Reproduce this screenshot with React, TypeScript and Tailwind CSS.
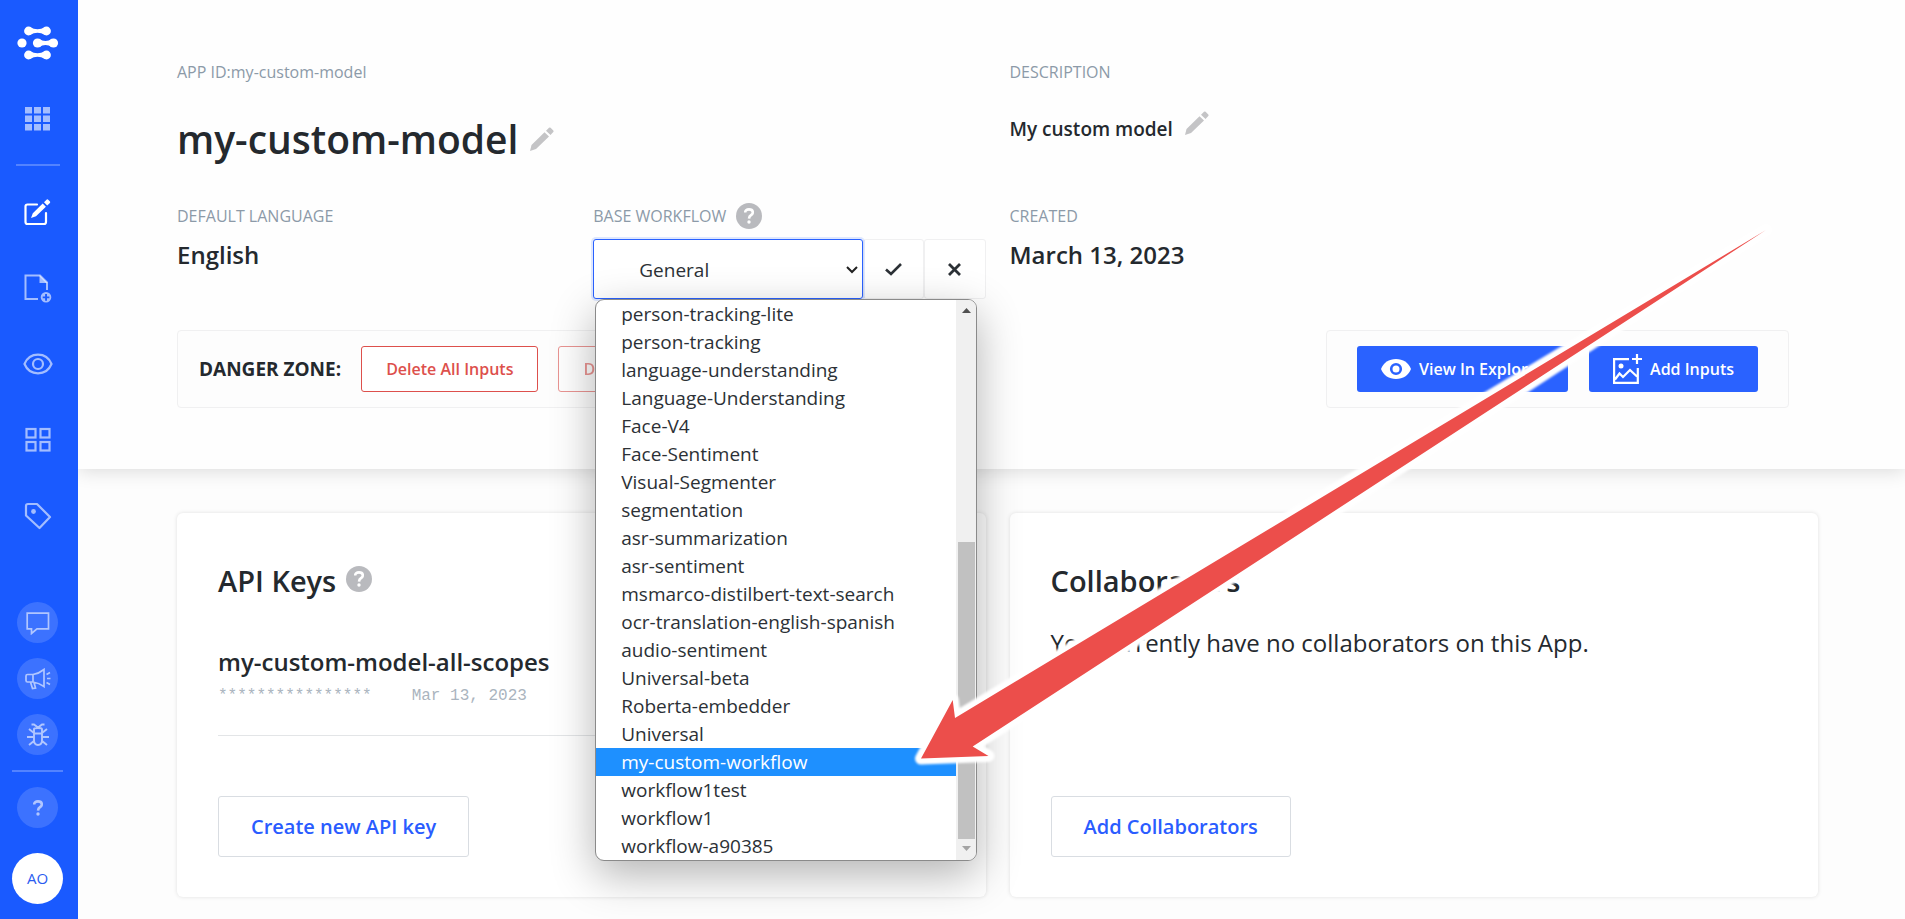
import React from "react";

const workflows = [
  "person-tracking-lite",
  "person-tracking",
  "language-understanding",
  "Language-Understanding",
  "Face-V4",
  "Face-Sentiment",
  "Visual-Segmenter",
  "segmentation",
  "asr-summarization",
  "asr-sentiment",
  "msmarco-distilbert-text-search",
  "ocr-translation-english-spanish",
  "audio-sentiment",
  "Universal-beta",
  "Roberta-embedder",
  "Universal",
  "my-custom-workflow",
  "workflow1test",
  "workflow1",
  "workflow-a90385",
];

const highlighted = "my-custom-workflow";

function Logo() {
  return (
    <svg width="42" height="34" viewBox="0 0 42 34" fill="white" aria-hidden="true">
      <circle cx="11.5" cy="5" r="4.4" />
      <circle cx="29.5" cy="5" r="4.4" />
      <path d="M13 .9Q20.500 5.400 28 .9V9.100Q20.500 4.600 13 9.100Z" />
      <circle cx="5" cy="17" r="4.600" />
      <circle cx="20.500" cy="17" r="4.600" />
      <circle cx="36.500" cy="17" r="4.600" />
      <path d="M22 12.700Q28.500 17.500 35 12.700V21.300Q28.500 16.500 22 21.300Z" />
      <circle cx="11.500" cy="29" r="4.400" />
      <circle cx="29.500" cy="29" r="4.400" />
      <path d="M13 24.900Q20.500 29.400 28 24.900V33.100Q20.500 28.600 13 33.100Z" />
    </svg>
  );
}

function AppsIcon() {
  return (
    <svg width="25" height="24" viewBox="0 0 25 24" fill="currentColor" aria-hidden="true">
      {[0, 8.5, 17].map((y) =>
        [0, 9, 18].map((x) => <rect key={`${x}-${y}`} x={x} y={y} width="7" height="6.5" />)
      )}
    </svg>
  );
}

function EditIcon() {
  return (
    <svg width="27" height="27" viewBox="0 0 27 27" aria-hidden="true">
      <path d="M13 5.500H3.500Q1.500 5.500 1.500 7.500V23Q1.500 25 3.500 25H20Q22 25 22 23V14" fill="none" stroke="currentColor" strokeWidth="2.200" strokeLinecap="round" />
      <path d="M7 19L8.800 14.200L18.700 4.600L21.900 7.800L12 17.200ZM20 3.300L22.800.600Q23.500 0 24.200.700L26 2.500Q26.500 3.200 25.900 3.900L23.200 6.500Z" fill="currentColor" />
    </svg>
  );
}

function FileAddIcon() {
  return (
    <svg width="28" height="29" viewBox="0 0 28 29" aria-hidden="true">
      <path d="M14 25H1.500V1.500H16L23 8.500V16" fill="none" stroke="currentColor" strokeWidth="2" />
      <path d="M15.500 1V9H23.500Z" fill="currentColor" />
      <path fillRule="evenodd" d="M22 18a5.300 5.300 0 1 0 0 10.600a5.300 5.300 0 1 0 0-10.600ZM21.100 20h1.900v2.400h2.400v1.900h-2.400v2.400h-1.900v-2.400h-2.400v-1.900h2.400Z" fill="currentColor" />
    </svg>
  );
}

function EyeIcon() {
  return (
    <svg width="30" height="22" viewBox="0 0 30 22" fill="none" stroke="currentColor" strokeWidth="2.200" aria-hidden="true">
      <path d="M1.500 11C4 5 9 1.700 15 1.700S26 5 28.500 11C26 17 21 20.300 15 20.300S4 17 1.500 11Z" />
      <circle cx="15" cy="11" r="5" />
    </svg>
  );
}

function SquaresIcon() {
  return (
    <svg width="26" height="26" viewBox="0 0 26 26" fill="none" stroke="currentColor" strokeWidth="2.200" aria-hidden="true">
      <rect x="1.500" y="2" width="9" height="8.500" />
      <rect x="15.500" y="2" width="9" height="8.500" />
      <rect x="1.500" y="15" width="9" height="8.500" />
      <rect x="15.500" y="15" width="9" height="8.500" />
    </svg>
  );
}

function TagIcon() {
  return (
    <svg width="28" height="28" viewBox="0 0 28 28" aria-hidden="true">
      <path d="M2 4Q2 2 4 2H13L26 15L15.500 26L2 13.500Z" fill="none" stroke="currentColor" strokeWidth="2.200" strokeLinejoin="round" />
      <circle cx="9.500" cy="9.500" r="2.400" fill="currentColor" />
    </svg>
  );
}

function ChatIcon() {
  return (
    <svg width="24" height="24" viewBox="0 0 24 24" fill="none" stroke="currentColor" strokeWidth="1.700" aria-hidden="true">
      <path d="M1.200 2.200H22.500V17.800H11L5.500 22.500V17.800H1.200Z" />
    </svg>
  );
}

function MegaphoneIcon() {
  return (
    <svg width="26" height="22" viewBox="0 0 26 22" fill="none" stroke="currentColor" strokeWidth="1.700" aria-hidden="true">
      <path d="M8 6.500H2.500Q1 6.500 1 8V12.500Q1 14 2.500 14H8ZM8 6.500Q14 5.500 19 1.500V18.500Q14 15 8 14M5.500 14L7.500 20.500L10.500 20L9 14.500M21.500 6.500L25 4.500M22 10.500H25.500M21.500 14.500L25 16.500" />
    </svg>
  );
}

function BugIcon() {
  return (
    <svg width="22" height="24" viewBox="0 0 22 24" fill="none" stroke="currentColor" strokeWidth="1.900" aria-hidden="true">
      <path d="M7 6Q7 5 11 5T15 6V17Q15 22 11 22T7 17ZM7 10.500H15M4.500 1.500H7L11 4.500L15 1.500H17.500M7 10L2 6M15 10L20 6M7 14H0M15 14H22M7.500 17.500L2 22M14.500 17.500L20 22" />
    </svg>
  );
}

function PencilIcon() {
  return (
    <svg width="24" height="24" viewBox="0 0 24 24" fill="currentColor" aria-hidden="true">
      <path d="M0 24L1.500 18L14.500 5.200L19 9.500L6 22ZM16 3.800L19 .800Q19.800 0 20.600.800L23.300 3.400Q24 4.200 23.300 5L20.500 8Z" />
    </svg>
  );
}

function ViewIcon() {
  return (
    <svg width="30" height="20" viewBox="0 0 30 20" aria-hidden="true">
      <path d="M0 10C2.500 3.500 8 0 15 0S27.500 3.500 30 10C27.500 16.500 22 20 15 20S2.500 16.500 0 10Z" fill="white" />
      <circle cx="15" cy="10" r="4.800" fill="white" stroke="#2a62ff" strokeWidth="2.600" />
    </svg>
  );
}

function AddImageIcon() {
  return (
    <svg width="29" height="30" viewBox="0 0 29 30" fill="none" stroke="white" strokeWidth="2.200" aria-hidden="true">
      <path d="M16 5.200H1.100V28.800H24.800V14M24 0V10M19 5H29M2 25.500L6.500 19.500L10 23L17 16L24 22.500" />
      <circle cx="8" cy="12" r="2.500" fill="white" stroke="none" />
    </svg>
  );
}

function QuestionMark() {
  return (
    <svg width="10" height="16" viewBox="0 0 10 16" fill="none" stroke="currentColor" strokeWidth="2.600" aria-hidden="true">
      <path d="M1.200 4.600Q1.200 1.400 5 1.400T8.800 4.300Q8.800 6 7 7.200T5 10.600" />
      <circle cx="5" cy="14" r="1.700" fill="currentColor" stroke="none" />
    </svg>
  );
}

function Help({ label }: { label: string }) {
  return (
    <button type="button" aria-label={label} className="flex size-[26px] shrink-0 items-center justify-center rounded-full bg-[#b9babe] text-white">
      <QuestionMark />
    </button>
  );
}

const navItems = [
  { label: "Edit app", icon: <EditIcon />, active: true },
  { label: "Add inputs", icon: <FileAddIcon />, active: false },
  { label: "Explorer", icon: <EyeIcon />, active: false },
  { label: "Models", icon: <SquaresIcon />, active: false },
  { label: "Concepts", icon: <TagIcon />, active: false },
];

const helpItems = [
  { label: "Chat", icon: <ChatIcon /> },
  { label: "Announcements", icon: <MegaphoneIcon /> },
  { label: "Report a bug", icon: <BugIcon /> },
];

function Sidebar() {
  return (
    <aside className="sticky top-0 flex h-screen w-[78px] shrink-0 flex-col items-center bg-[#1a5aff] pt-2.5 pr-[3px] pb-[15px] text-white/60">
      <a href="#home" aria-label="Home" className="flex h-[66px] shrink-0 items-center">
        <Logo />
      </a>
      <a href="#apps" aria-label="Apps" className="flex h-[88px] shrink-0 items-start pt-[31px]">
        <AppsIcon />
      </a>
      <div className="h-0.5 w-11 shrink-0 bg-white/25" />
      <nav className="mt-2 flex shrink-0 flex-col">
        {navItems.map((item) => (
          <a
            key={item.label}
            href="#section"
            aria-label={item.label}
            className={item.active ? "flex h-[76px] items-center justify-center text-white" : "flex h-[76px] items-center justify-center"}
          >
            {item.icon}
          </a>
        ))}
      </nav>
      <div className="mt-auto flex shrink-0 flex-col items-center gap-[15px]">
        {helpItems.map((item) => (
          <button key={item.label} type="button" aria-label={item.label} className="flex size-[41px] items-center justify-center rounded-full bg-white/15">
            {item.icon}
          </button>
        ))}
        <div className="h-0.5 w-[51px] bg-white/25" />
        <button type="button" aria-label="Help" className="flex size-[41px] items-center justify-center rounded-full bg-white/15">
          <QuestionMark />
        </button>
      </div>
      <button type="button" className="mt-[25px] size-[51px] shrink-0 rounded-full bg-white text-[15px] text-[#2a5cf0]">
        AO
      </button>
    </aside>
  );
}

function Label({ children }: { children: React.ReactNode }) {
  return <div className="flex h-6 items-center pt-0.5 text-base text-[#8c9aa8]">{children}</div>;
}

function WorkflowMenu() {
  return (
    <div className="absolute top-[60px] left-0.5 z-10 flex w-[382px] overflow-hidden rounded-[9px] border border-[#8a8a8a] bg-white shadow-[0_14px_44px_rgba(0,0,0,0.3)]">
      <ul role="listbox" aria-label="Base workflow" className="flex-1">
        {workflows.map((name) => (
          <li
            key={name}
            role="option"
            aria-selected={name === highlighted}
            className={
              name === highlighted
                ? "h-7 bg-[#1e90ff] pl-[25px] text-[19px] leading-7 text-white"
                : "h-7 pl-[25px] text-[19px] leading-7 text-[#2c3136]"
            }
          >
            {name}
          </li>
        ))}
      </ul>
      <div className="flex w-5 flex-col items-center bg-[#f0f0f0]" aria-hidden="true">
        <svg width="9" height="22" viewBox="0 0 9 22" fill="#505050">
          <path d="M0 13L4.500 8L9 13Z" />
        </svg>
        <div className="mt-auto h-[297px] w-[17px] bg-[#c1c1c1]" />
        <svg width="9" height="21" viewBox="0 0 9 21" fill="#a3a3a3">
          <path d="M0 7L4.500 12L9 7Z" />
        </svg>
      </div>
    </div>
  );
}

function WorkflowPicker() {
  return (
    <div className="relative flex h-[60px]">
      <div className="relative flex w-[270px]">
        <select
          id="base-workflow"
          defaultValue="General"
          className="w-full appearance-none rounded-[3px] border border-[#2a62ff] bg-white pt-0.5 pl-[45px] text-[19px] text-[#2c3136] shadow-[0_0_0_2px_rgba(42,98,255,0.15)] outline-none"
        >
          <option>General</option>
          {workflows.map((name) => (
            <option key={name}>{name}</option>
          ))}
        </select>
        <svg width="12" height="8" viewBox="0 0 12 8" fill="none" stroke="#222" strokeWidth="2" className="pointer-events-none absolute top-[27px] right-[5px]" aria-hidden="true">
          <path d="M1 1L6 6L11 1" />
        </svg>
      </div>
      <button type="button" aria-label="Save" className="flex flex-1 items-center justify-center rounded-[3px] border border-[#f0f0f1] bg-white text-[#2c3136]">
        <svg width="17" height="13" viewBox="0 0 17 13" fill="none" stroke="currentColor" strokeWidth="2.600" aria-hidden="true">
          <path d="M1 6.500L6 11L16 1" />
        </svg>
      </button>
      <button type="button" aria-label="Cancel" className="flex flex-1 items-center justify-center rounded-[3px] border border-[#f0f0f1] bg-white text-[#2c3136]">
        <svg width="13" height="13" viewBox="0 0 13 13" fill="none" stroke="currentColor" strokeWidth="2.800" aria-hidden="true">
          <path d="M1 1L12 12M12 1L1 12" />
        </svg>
      </button>
      <WorkflowMenu />
    </div>
  );
}

function Arrow() {
  return (
    <svg width="865" height="550" viewBox="0 0 865 550" className="pointer-events-none absolute top-[220px] left-[911px] z-20" aria-hidden="true">
      <defs>
        <filter id="soft" x="-5%" y="-5%" width="110%" height="110%">
          <feGaussianBlur stdDeviation="0.8" />
        </filter>
      </defs>
      <path d="M10 538.500L41.700 480L44 498L855 10L61.700 526.500L77.500 536Z" fill="white" stroke="white" strokeWidth="12" strokeLinejoin="round" filter="url(#soft)" />
      <path d="M10 538.500L41.700 480L44 498L855 10L61.700 526.500L77.500 536Z" fill="#ec4e4b" />
    </svg>
  );
}

function Card({ title, help, action, children }: { title: string; help?: boolean; action: string; children: React.ReactNode }) {
  return (
    <section className="flex h-[384px] flex-col rounded-md bg-white px-[41px] pt-12 pb-10 shadow-[0_0_4px_rgba(0,0,0,0.12)]">
      <div className="flex h-10 items-center gap-2.5">
        <h2 className="text-[29px] font-semibold text-[#24292e]">{title}</h2>
        {help && (
          <div className="mb-1">
            <Help label={`About ${title}`} />
          </div>
        )}
      </div>
      {children}
      <button type="button" className="mt-auto h-[61px] self-start rounded-[3px] border border-[#d9dde2] bg-white px-8 text-xl font-semibold text-[#2a5cff]">
        {action}
      </button>
    </section>
  );
}

export default function App() {
  return (
    <div className="relative flex min-h-screen bg-[#fdfdfd] font-['Open_Sans','Noto_Sans',sans-serif] text-[#24292e]">
      <Sidebar />
      <main className="min-w-0 flex-1">
        <header className="bg-[#fefefe] pt-[59px] pr-[87px] pb-[61px] pl-[99px] shadow-[0_2px_18px_rgba(0,0,0,0.14)]">
          <div className="grid grid-cols-2 gap-x-6">
            <div>
              <Label>APP ID:my-custom-model</Label>
              <div className="mt-7 flex h-14 items-center gap-3">
                <h1 className="text-[39px] font-semibold">my-custom-model</h1>
                <button type="button" aria-label="Edit app ID" className="text-[#c4c4c6]"><PencilIcon /></button>
              </div>
            </div>
            <div>
              <Label>DESCRIPTION</Label>
              <div className="mt-7 flex h-9 items-center gap-3">
                <p className="text-[19px] font-semibold">My custom model</p>
                <button type="button" aria-label="Edit description" className="mb-3 text-[#c4c4c6]"><PencilIcon /></button>
              </div>
            </div>
          </div>
          <div className="mt-9 grid grid-cols-4 gap-x-6">
            <div>
              <Label>DEFAULT LANGUAGE</Label>
              <p className="mt-3 text-2xl font-semibold">English</p>
            </div>
            <div>
              <Label>
                <label htmlFor="base-workflow" className="mr-2.5">BASE WORKFLOW</label>
                <Help label="About base workflow" />
              </Label>
              <div className="mt-3">
                <WorkflowPicker />
              </div>
            </div>
            <div>
              <Label>CREATED</Label>
              <p className="mt-3 text-2xl font-semibold">March 13, 2023</p>
            </div>
          </div>
          <div className="mt-[31px] flex justify-between pr-[29px]">
            <div className="flex h-[78px] items-center gap-5 rounded border border-[#f0f0f1] bg-[#fdfdfd] px-[21px]">
              <span className="text-[19px] font-bold">DANGER ZONE:</span>
              <button type="button" className="h-[46px] rounded-[3px] border border-[#dd504c] bg-white px-6 text-base font-semibold text-[#dd504c]">
                Delete All Inputs
              </button>
              <button type="button" disabled className="h-[46px] rounded-[3px] border border-[#dd504c] bg-white px-6 text-base font-semibold text-[#dd504c] opacity-60">
                Delete App
              </button>
            </div>
            <div className="flex h-[78px] items-center gap-[21px] rounded border border-[#f0f0f1] bg-[#fdfdfd] px-[30px]">
              <button type="button" className="flex h-[46px] items-center gap-2 rounded-[3px] bg-[#2a62ff] px-6 text-base font-semibold text-white">
                <ViewIcon />
                View In Explorer
              </button>
              <button type="button" className="flex h-[46px] items-center gap-2 rounded-[3px] bg-[#2a62ff] px-6 text-base font-semibold text-white">
                <AddImageIcon />
                Add Inputs
              </button>
            </div>
          </div>
        </header>
        <div className="grid grid-cols-2 gap-6 pt-11 pr-[87px] pb-5 pl-[99px]">
          <Card title="API Keys" help action="Create new API key">
            <div className="mt-[45px] border-b border-[#e3e5e7] pb-[27px]">
              <h3 className="text-2xl font-semibold">my-custom-model-all-scopes</h3>
              <div className="mt-1.5 flex gap-10 font-['Liberation_Mono',monospace] text-base text-[#aab4be]">
                <span>****************</span>
                <span>Mar 13, 2023</span>
              </div>
            </div>
          </Card>
          <Card title="Collaborators" action="Add Collaborators">
            <p className="mt-[26px] text-2xl">You currently have no collaborators on this App.</p>
          </Card>
        </div>
      </main>
      <Arrow />
    </div>
  );
}
